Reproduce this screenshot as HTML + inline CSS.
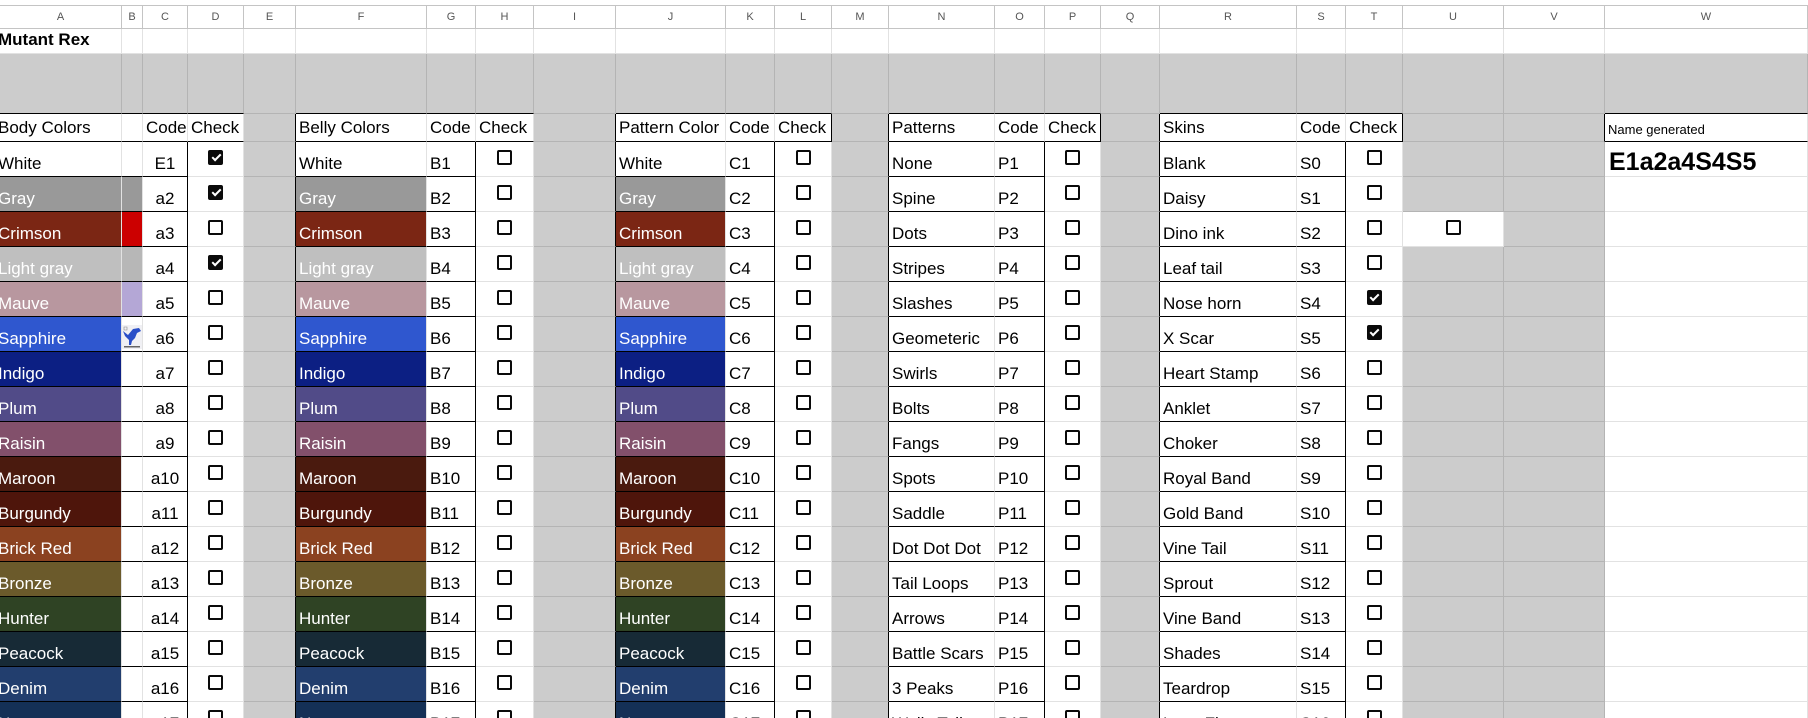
<!DOCTYPE html>
<html><head><meta charset="utf-8">
<style>
html,body{margin:0;padding:0;background:#fff;width:1808px;height:718px;overflow:hidden}
body{font-family:"Liberation Sans",Arial,sans-serif;color:#000}
.top{height:5px}
table{table-layout:fixed;border-collapse:separate;border-spacing:0;width:1808px}
td{border-right:1px solid #e2e2e2;border-bottom:1px solid #e2e2e2;padding:0 0 2px 3px;font-size:17px;white-space:nowrap;overflow:hidden;vertical-align:bottom;line-height:20px}
tr.h td{font-size:11px;color:#555;text-align:center;vertical-align:middle;padding:0;border-top:1px solid #c4c4c4;border-color:#c4c4c4;line-height:14px}
tr.hd td{vertical-align:middle;padding-bottom:0}
tr.d{height:35px}
.g{background:#ccc;border-color:#b4b4b4}
.kr{border-right-color:#000!important}
.kb{border-bottom-color:#000!important}
.w{color:#fff}
.a{padding-left:0;text-indent:-2px}
.cc{text-align:center;padding-left:0}
.c{vertical-align:top;text-align:center;padding:8px 0 0 0}
.b{display:inline-block;width:15px;height:15px;box-sizing:border-box;border:2px solid #0a0a0a;border-radius:2px;position:relative}
.k{background:#0a0a0a}
.k::after{content:"";position:absolute;left:3.5px;top:0px;width:3px;height:7px;border:solid #fff;border-width:0 2px 2px 0;transform:rotate(45deg)}
</style></head><body>
<div class="top"></div>
<table>
<colgroup>
<col style="width:122px"><col style="width:21px"><col style="width:45px"><col style="width:56px"><col style="width:52px"><col style="width:131px"><col style="width:49px"><col style="width:58px"><col style="width:82px"><col style="width:110px"><col style="width:49px"><col style="width:57px"><col style="width:57px"><col style="width:106px"><col style="width:50px"><col style="width:56px"><col style="width:59px"><col style="width:137px"><col style="width:49px"><col style="width:57px"><col style="width:101px"><col style="width:101px"><col style="width:203px">
</colgroup>
<tr class="h" style="height:24px"><td>A</td><td>B</td><td>C</td><td>D</td><td>E</td><td>F</td><td>G</td><td>H</td><td>I</td><td>J</td><td>K</td><td>L</td><td>M</td><td>N</td><td>O</td><td>P</td><td>Q</td><td>R</td><td>S</td><td>T</td><td>U</td><td>V</td><td>W</td></tr>
<tr style="height:25px"><td class="a" style="font-weight:bold;padding-bottom:3px">Mutant Rex</td><td></td><td></td><td></td><td></td><td></td><td></td><td></td><td></td><td></td><td></td><td></td><td></td><td></td><td></td><td></td><td></td><td></td><td></td><td></td><td></td><td></td><td></td></tr>
<tr style="height:60px"><td class="g kb"></td><td class="g kb"></td><td class="g kb"></td><td class="g kb"></td><td class="g"></td><td class="g kb"></td><td class="g kb"></td><td class="g kb"></td><td class="g"></td><td class="g kb"></td><td class="g kb"></td><td class="g kb"></td><td class="g"></td><td class="g kb"></td><td class="g kb"></td><td class="g kb"></td><td class="g"></td><td class="g kb"></td><td class="g kb"></td><td class="g kb"></td><td class="g"></td><td class="g"></td><td class="g kb"></td></tr>
<tr class="hd" style="height:28px"><td class="a kb">Body Colors</td><td class="kb"></td><td class="kb">Code</td><td class="kb">Check</td><td class="g kr"></td><td class="kb">Belly Colors</td><td class="kb">Code</td><td class="kb">Check</td><td class="g kr"></td><td class="kb">Pattern Color</td><td class="kb">Code</td><td class="kb kr">Check</td><td class="g kr"></td><td class="kb">Patterns</td><td class="kb">Code</td><td class="kb kr">Check</td><td class="g kr"></td><td class="kb">Skins</td><td class="kb">Code</td><td class="kb kr">Check</td><td class="g"></td><td class="g kr"></td><td class="kb" style="font-size:13px;vertical-align:bottom;padding-bottom:1px">Name generated</td></tr>

<tr class="d"><td class="a kb">White</td><td class="kb"></td><td class="cc kb kr">E1</td><td class="c"><i class="b k"></i></td><td class="g kr"></td><td class="kb">White</td><td class="kb kr">B1</td><td class="c"><i class="b"></i></td><td class="g kr"></td><td class="kb">White</td><td class="kb kr">C1</td><td class="c"><i class="b"></i></td><td class="g kr"></td><td class="kb">None</td><td class="kb kr">P1</td><td class="c"><i class="b"></i></td><td class="g kr"></td><td class="kb">Blank</td><td class="kb kr">S0</td><td class="c"><i class="b"></i></td><td class="g"></td><td class="g"></td><td style="font-size:25px;font-weight:bold;vertical-align:top;padding:7px 0 0 4px;line-height:26px">E1a2a4S4S5</td></tr>

<tr class="d"><td class="a kb w" style="background:#999">Gray</td><td class="kb" style="background:#999"></td><td class="cc kb kr">a2</td><td class="c"><i class="b k"></i></td><td class="g kr"></td><td class="kb w" style="background:#999">Gray</td><td class="kb kr">B2</td><td class="c"><i class="b"></i></td><td class="g kr"></td><td class="kb w" style="background:#999">Gray</td><td class="kb kr">C2</td><td class="c"><i class="b"></i></td><td class="g kr"></td><td class="kb">Spine</td><td class="kb kr">P2</td><td class="c"><i class="b"></i></td><td class="g kr"></td><td class="kb">Daisy</td><td class="kb kr">S1</td><td class="c"><i class="b"></i></td><td class="g"></td><td class="g"></td><td></td></tr>

<tr class="d"><td class="a kb w" style="background:#7b2614">Crimson</td><td class="kb" style="background:#cc0000"></td><td class="cc kb kr">a3</td><td class="c"><i class="b"></i></td><td class="g kr"></td><td class="kb w" style="background:#7b2614">Crimson</td><td class="kb kr">B3</td><td class="c"><i class="b"></i></td><td class="g kr"></td><td class="kb w" style="background:#7b2614">Crimson</td><td class="kb kr">C3</td><td class="c"><i class="b"></i></td><td class="g kr"></td><td class="kb">Dots</td><td class="kb kr">P3</td><td class="c"><i class="b"></i></td><td class="g kr"></td><td class="kb">Dino ink</td><td class="kb kr">S2</td><td class="c"><i class="b"></i></td><td class="c"><i class="b"></i></td><td class="g"></td><td></td></tr>

<tr class="d"><td class="a kb w" style="background:#bfbfbf">Light gray</td><td class="kb" style="background:#b7b7b7"></td><td class="cc kb kr">a4</td><td class="c"><i class="b k"></i></td><td class="g kr"></td><td class="kb w" style="background:#bfbfbf">Light gray</td><td class="kb kr">B4</td><td class="c"><i class="b"></i></td><td class="g kr"></td><td class="kb w" style="background:#bfbfbf">Light gray</td><td class="kb kr">C4</td><td class="c"><i class="b"></i></td><td class="g kr"></td><td class="kb">Stripes</td><td class="kb kr">P4</td><td class="c"><i class="b"></i></td><td class="g kr"></td><td class="kb">Leaf tail</td><td class="kb kr">S3</td><td class="c"><i class="b"></i></td><td class="g"></td><td class="g"></td><td></td></tr>

<tr class="d"><td class="a kb w" style="background:#b8979f">Mauve</td><td class="kb" style="background:#b4a7d6"></td><td class="cc kb kr">a5</td><td class="c"><i class="b"></i></td><td class="g kr"></td><td class="kb w" style="background:#b8979f">Mauve</td><td class="kb kr">B5</td><td class="c"><i class="b"></i></td><td class="g kr"></td><td class="kb w" style="background:#b8979f">Mauve</td><td class="kb kr">C5</td><td class="c"><i class="b"></i></td><td class="g kr"></td><td class="kb">Slashes</td><td class="kb kr">P5</td><td class="c"><i class="b"></i></td><td class="g kr"></td><td class="kb">Nose horn</td><td class="kb kr">S4</td><td class="c"><i class="b k"></i></td><td class="g"></td><td class="g"></td><td></td></tr>

<tr class="d"><td class="a kb w" style="background:#2f57cf">Sapphire</td><td class="kb" style="padding:0;vertical-align:middle"><svg width="20" height="24" viewBox="0 0 20 24" style="display:block;margin-top:5px"><rect width="20" height="24" fill="#f0f0f4"/><path d="M1 6 L6 10 L11 4 L17 3 L19 6 L15 8 L13 13 L10 16 L9 20 L7 20 L7 15 L3 11 Z" fill="#2a4fc8"/><path d="M2 2 L5 2 L5 5 L2 5 Z" fill="none" stroke="#888" stroke-width="0.6"/><rect x="2" y="21" width="16" height="1.5" fill="#666"/></svg></td><td class="cc kb kr">a6</td><td class="c"><i class="b"></i></td><td class="g kr"></td><td class="kb w" style="background:#2f57cf">Sapphire</td><td class="kb kr">B6</td><td class="c"><i class="b"></i></td><td class="g kr"></td><td class="kb w" style="background:#2f57cf">Sapphire</td><td class="kb kr">C6</td><td class="c"><i class="b"></i></td><td class="g kr"></td><td class="kb">Geometeric</td><td class="kb kr">P6</td><td class="c"><i class="b"></i></td><td class="g kr"></td><td class="kb">X Scar</td><td class="kb kr">S5</td><td class="c"><i class="b k"></i></td><td class="g"></td><td class="g"></td><td></td></tr>

<tr class="d"><td class="a kb w" style="background:#0c1f83">Indigo</td><td class="kb"></td><td class="cc kb kr">a7</td><td class="c"><i class="b"></i></td><td class="g kr"></td><td class="kb w" style="background:#0c1f83">Indigo</td><td class="kb kr">B7</td><td class="c"><i class="b"></i></td><td class="g kr"></td><td class="kb w" style="background:#0c1f83">Indigo</td><td class="kb kr">C7</td><td class="c"><i class="b"></i></td><td class="g kr"></td><td class="kb">Swirls</td><td class="kb kr">P7</td><td class="c"><i class="b"></i></td><td class="g kr"></td><td class="kb">Heart Stamp</td><td class="kb kr">S6</td><td class="c"><i class="b"></i></td><td class="g"></td><td class="g"></td><td></td></tr>

<tr class="d"><td class="a kb w" style="background:#514b88">Plum</td><td class="kb"></td><td class="cc kb kr">a8</td><td class="c"><i class="b"></i></td><td class="g kr"></td><td class="kb w" style="background:#514b88">Plum</td><td class="kb kr">B8</td><td class="c"><i class="b"></i></td><td class="g kr"></td><td class="kb w" style="background:#514b88">Plum</td><td class="kb kr">C8</td><td class="c"><i class="b"></i></td><td class="g kr"></td><td class="kb">Bolts</td><td class="kb kr">P8</td><td class="c"><i class="b"></i></td><td class="g kr"></td><td class="kb">Anklet</td><td class="kb kr">S7</td><td class="c"><i class="b"></i></td><td class="g"></td><td class="g"></td><td></td></tr>

<tr class="d"><td class="a kb w" style="background:#82506b">Raisin</td><td class="kb"></td><td class="cc kb kr">a9</td><td class="c"><i class="b"></i></td><td class="g kr"></td><td class="kb w" style="background:#82506b">Raisin</td><td class="kb kr">B9</td><td class="c"><i class="b"></i></td><td class="g kr"></td><td class="kb w" style="background:#82506b">Raisin</td><td class="kb kr">C9</td><td class="c"><i class="b"></i></td><td class="g kr"></td><td class="kb">Fangs</td><td class="kb kr">P9</td><td class="c"><i class="b"></i></td><td class="g kr"></td><td class="kb">Choker</td><td class="kb kr">S8</td><td class="c"><i class="b"></i></td><td class="g"></td><td class="g"></td><td></td></tr>

<tr class="d"><td class="a kb w" style="background:#4a1a0e">Maroon</td><td class="kb"></td><td class="cc kb kr">a10</td><td class="c"><i class="b"></i></td><td class="g kr"></td><td class="kb w" style="background:#4a1a0e">Maroon</td><td class="kb kr">B10</td><td class="c"><i class="b"></i></td><td class="g kr"></td><td class="kb w" style="background:#4a1a0e">Maroon</td><td class="kb kr">C10</td><td class="c"><i class="b"></i></td><td class="g kr"></td><td class="kb">Spots</td><td class="kb kr">P10</td><td class="c"><i class="b"></i></td><td class="g kr"></td><td class="kb">Royal Band</td><td class="kb kr">S9</td><td class="c"><i class="b"></i></td><td class="g"></td><td class="g"></td><td></td></tr>

<tr class="d"><td class="a kb w" style="background:#4e150b">Burgundy</td><td class="kb"></td><td class="cc kb kr">a11</td><td class="c"><i class="b"></i></td><td class="g kr"></td><td class="kb w" style="background:#4e150b">Burgundy</td><td class="kb kr">B11</td><td class="c"><i class="b"></i></td><td class="g kr"></td><td class="kb w" style="background:#4e150b">Burgundy</td><td class="kb kr">C11</td><td class="c"><i class="b"></i></td><td class="g kr"></td><td class="kb">Saddle</td><td class="kb kr">P11</td><td class="c"><i class="b"></i></td><td class="g kr"></td><td class="kb">Gold Band</td><td class="kb kr">S10</td><td class="c"><i class="b"></i></td><td class="g"></td><td class="g"></td><td></td></tr>

<tr class="d"><td class="a kb w" style="background:#8b4220">Brick Red</td><td class="kb"></td><td class="cc kb kr">a12</td><td class="c"><i class="b"></i></td><td class="g kr"></td><td class="kb w" style="background:#8b4220">Brick Red</td><td class="kb kr">B12</td><td class="c"><i class="b"></i></td><td class="g kr"></td><td class="kb w" style="background:#8b4220">Brick Red</td><td class="kb kr">C12</td><td class="c"><i class="b"></i></td><td class="g kr"></td><td class="kb">Dot Dot Dot</td><td class="kb kr">P12</td><td class="c"><i class="b"></i></td><td class="g kr"></td><td class="kb">Vine Tail</td><td class="kb kr">S11</td><td class="c"><i class="b"></i></td><td class="g"></td><td class="g"></td><td></td></tr>

<tr class="d"><td class="a kb w" style="background:#6b5a2b">Bronze</td><td class="kb"></td><td class="cc kb kr">a13</td><td class="c"><i class="b"></i></td><td class="g kr"></td><td class="kb w" style="background:#6b5a2b">Bronze</td><td class="kb kr">B13</td><td class="c"><i class="b"></i></td><td class="g kr"></td><td class="kb w" style="background:#6b5a2b">Bronze</td><td class="kb kr">C13</td><td class="c"><i class="b"></i></td><td class="g kr"></td><td class="kb">Tail Loops</td><td class="kb kr">P13</td><td class="c"><i class="b"></i></td><td class="g kr"></td><td class="kb">Sprout</td><td class="kb kr">S12</td><td class="c"><i class="b"></i></td><td class="g"></td><td class="g"></td><td></td></tr>

<tr class="d"><td class="a kb w" style="background:#2f4324">Hunter</td><td class="kb"></td><td class="cc kb kr">a14</td><td class="c"><i class="b"></i></td><td class="g kr"></td><td class="kb w" style="background:#2f4324">Hunter</td><td class="kb kr">B14</td><td class="c"><i class="b"></i></td><td class="g kr"></td><td class="kb w" style="background:#2f4324">Hunter</td><td class="kb kr">C14</td><td class="c"><i class="b"></i></td><td class="g kr"></td><td class="kb">Arrows</td><td class="kb kr">P14</td><td class="c"><i class="b"></i></td><td class="g kr"></td><td class="kb">Vine Band</td><td class="kb kr">S13</td><td class="c"><i class="b"></i></td><td class="g"></td><td class="g"></td><td></td></tr>

<tr class="d"><td class="a kb w" style="background:#172a36">Peacock</td><td class="kb"></td><td class="cc kb kr">a15</td><td class="c"><i class="b"></i></td><td class="g kr"></td><td class="kb w" style="background:#172a36">Peacock</td><td class="kb kr">B15</td><td class="c"><i class="b"></i></td><td class="g kr"></td><td class="kb w" style="background:#172a36">Peacock</td><td class="kb kr">C15</td><td class="c"><i class="b"></i></td><td class="g kr"></td><td class="kb">Battle Scars</td><td class="kb kr">P15</td><td class="c"><i class="b"></i></td><td class="g kr"></td><td class="kb">Shades</td><td class="kb kr">S14</td><td class="c"><i class="b"></i></td><td class="g"></td><td class="g"></td><td></td></tr>

<tr class="d"><td class="a kb w" style="background:#223e6e">Denim</td><td class="kb"></td><td class="cc kb kr">a16</td><td class="c"><i class="b"></i></td><td class="g kr"></td><td class="kb w" style="background:#223e6e">Denim</td><td class="kb kr">B16</td><td class="c"><i class="b"></i></td><td class="g kr"></td><td class="kb w" style="background:#223e6e">Denim</td><td class="kb kr">C16</td><td class="c"><i class="b"></i></td><td class="g kr"></td><td class="kb">3 Peaks</td><td class="kb kr">P16</td><td class="c"><i class="b"></i></td><td class="g kr"></td><td class="kb">Teardrop</td><td class="kb kr">S15</td><td class="c"><i class="b"></i></td><td class="g"></td><td class="g"></td><td></td></tr>

<tr class="d"><td class="a kb w" style="background:#143056">Navy</td><td class="kb"></td><td class="cc kb kr">a17</td><td class="c"><i class="b"></i></td><td class="g kr"></td><td class="kb w" style="background:#143056">Navy</td><td class="kb kr">B17</td><td class="c"><i class="b"></i></td><td class="g kr"></td><td class="kb w" style="background:#143056">Navy</td><td class="kb kr">C17</td><td class="c"><i class="b"></i></td><td class="g kr"></td><td class="kb">Wally Tail</td><td class="kb kr">P17</td><td class="c"><i class="b"></i></td><td class="g kr"></td><td class="kb">Lava Flames</td><td class="kb kr">S16</td><td class="c"><i class="b"></i></td><td class="g"></td><td class="g"></td><td></td></tr>
</table>
</body></html>
